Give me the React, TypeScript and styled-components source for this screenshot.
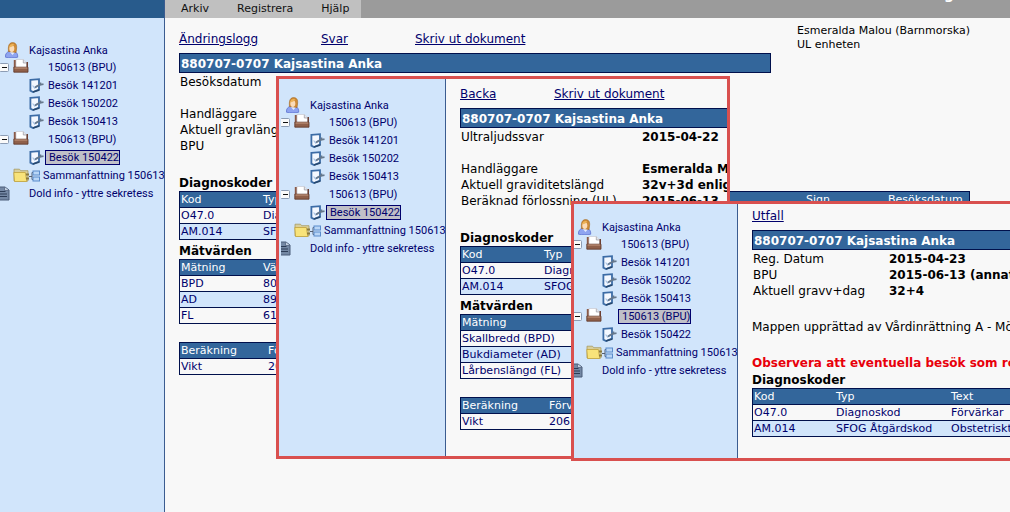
import React from "react";
import styled, { createGlobalStyle, css } from "styled-components";

const navy = "#00006c";
const steel = "#33669b";
const ink = "#00104c";
const pale = "#d1e5fb";
const verdana = `"DejaVu Sans", Verdana, sans-serif`;
const treeFont = `Roboto, Tahoma, sans-serif`;

const GlobalStyle = createGlobalStyle`
  *, *::before, *::after { box-sizing: border-box; }
  body {
    margin: 0;
    background: #f8f8f8;
    color: #000;
    font: 12px/16px ${verdana};
  }
`;

const Page = styled.div`
  position: relative;
  display: flex;
  min-height: 100vh;
  overflow: hidden;
`;

const Sidebar = styled.aside<{ $width: number; $top: number }>`
  flex: none;
  width: ${(p) => p.$width}px;
  padding-top: ${(p) => p.$top}px;
  overflow: hidden;
  background: ${pale};
  border-right: 1px solid #3b5c90;
  display: flex;
  flex-direction: column;
`;

const SidebarCap = styled.div`
  height: 18px;
  background: #285b8c;
  margin-bottom: 23px;
`;

const TreeList = styled.ul`
  list-style: none;
  margin: 0;
  padding: 0;
  width: 164px;
  align-self: flex-end;
`;

const TreeRow = styled.li<{ $short?: boolean }>`
  display: flex;
  align-items: center;
  height: ${(p) => (p.$short ? 17 : 18)}px;
`;

const IconSlot = styled.span<{ $indent: number; $width: number }>`
  flex: none;
  display: flex;
  width: ${(p) => p.$width - p.$indent}px;
  margin-left: ${(p) => p.$indent}px;
`;

const Toggle = styled.button`
  flex: none;
  display: flex;
  width: 13px;
  padding: 0;
  border: 0;
  background: none;
`;

const TreeLabel = styled.a<{ $selected?: boolean }>`
  padding-top: 2px;
  font: 11px/14px ${treeFont};
  color: ${navy};
  text-decoration: none;
  white-space: nowrap;
  ${(p) =>
    p.$selected &&
    css`
      margin-left: -3px;
      padding: 0 0 0 3px;
      line-height: 13px;
      background: #c0c0c8;
      border: 1px solid ${navy};
    `}
`;

const Workspace = styled.div`
  flex: 1;
  min-width: 0;
`;

const MenuBar = styled.header`
  display: flex;
  justify-content: space-between;
  height: 18px;
  overflow: hidden;
  background: #9b9b9b;
`;

const Menu = styled.nav`
  display: flex;
  gap: 28px;
  padding: 0 12px 0 16px;
  background: #c0c0c0;
`;

const MenuButton = styled.button`
  padding: 0;
  border: 0;
  background: none;
  color: #111;
  font: 11px/16px ${verdana};
`;

const Brand = styled.span`
  margin: -13px 56px 0 0;
  color: #fff;
  font: bold 14px/14px ${verdana};
`;

const Content = styled.main`
  padding: 0 26px 20px 14px;
`;

const HeadRow = styled.div`
  display: flex;
  gap: 26px;
`;

const HeadMain = styled.div`
  flex: 1;
  min-width: 0;
  padding-top: 13px;
`;

const UserInfo = styled.address`
  flex: none;
  width: 187px;
  padding-top: 6px;
  font: 11px/14px ${verdana};
  white-space: nowrap;
`;

const Links = styled.nav<{ $columns: string }>`
  display: grid;
  grid-template-columns: ${(p) => p.$columns};
  margin-bottom: 6px;
`;

const Link = styled.a`
  justify-self: start;
  color: ${navy};
  white-space: nowrap;
`;

const PatientBar = styled.h1`
  margin: 0 0 1px;
  height: 20px;
  padding: 2px 0 0 1px;
  border: 1px solid ${ink};
  background: ${steel};
  color: #fff;
  font: bold 12px/16px ${verdana};
  white-space: nowrap;
`;

const Facts = styled.dl<{ $label: number; $gap?: number }>`
  display: grid;
  grid-template-columns: ${(p) => p.$label}px auto;
  margin: 0 0 ${(p) => p.$gap ?? 0}px;
  padding-left: 1px;
  white-space: nowrap;

  dt {
    grid-column: 1;
  }
  dd {
    grid-column: 2;
    margin: 0;
    font-weight: bold;
  }
`;

const Note = styled.p<{ $alert?: boolean }>`
  margin: 20px 0 0;
  white-space: nowrap;
  ${(p) =>
    p.$alert &&
    css`
      color: #e8000b;
      font-weight: bold;
    `}
`;

const SectionTitle = styled.h2<{ $space: number }>`
  margin: ${(p) => p.$space}px 0 0;
  font: bold 12px/15px ${verdana};
`;

const Table = styled.table<{ $space?: number; $inset?: number }>`
  width: calc(100% - ${(p) => p.$inset ?? 0}px);
  margin-top: ${(p) => p.$space ?? 0}px;
  table-layout: fixed;
  border-collapse: separate;
  border-spacing: 0;
  border: 1px solid ${ink};
  border-bottom: 0;
  font: 11px/15px ${verdana};
  color: ${navy};

  th,
  td {
    height: 16px;
    padding: 0 0 0 1px;
    border-bottom: 1px solid ${ink};
    text-align: left;
    font-weight: normal;
    white-space: nowrap;
    overflow: hidden;
  }
  th {
    background: ${steel};
    color: #fff;
  }
  tbody tr:nth-child(even) td {
    background: ${pale};
  }
`;

const Window = styled.section`
  position: absolute;
  display: flex;
  overflow: hidden;
  background: #f8f8f8;
  border: 3px solid #d9504f;
`;

const AnswerWindow = styled(Window)`
  left: 276px;
  top: 76px;
  width: 454px;
  height: 383px;
`;

const OutcomeWindow = styled(Window)`
  left: 571px;
  top: 201px;
  right: -3px;
  height: 260px;
`;

/* Wide sheet that runs on past the window's right edge */
const Sheet = styled.div<{ $top: number }>`
  flex: none;
  width: 806px;
  padding: ${(p) => p.$top}px 0 0 14px;
`;

const UserIcon = () => (
  <svg width="16" height="16" viewBox="0 0 16 16">
    <path d="M1.500 15.200C1 12 3 9.800 5.500 9.300h4.500c2.500.5 4 2.900 3.700 5.900-3 .9-9 .9-12.200 0z" fill="#8fa4f0" stroke="#5e74d0" strokeWidth=".8" />
    <path d="M5.500 9.500l3 3.500 3-3.500z" fill="#e4ecff" />
    <path d="M4.500 9.500C4 5 4.500.7 8.500.6c4 0 4.500 3.400 4 6.400L12 10.500 9 10z" fill="#cf8c38" stroke="#a3661f" strokeWidth=".6" />
    <ellipse cx="7.800" cy="6.600" rx="2.500" ry="3.400" fill="#fbdcb8" />
    <path d="M5.200 5.500C5.500 2.500 7.500 1.500 10 2.200 9.500 4 7.500 5 5.200 5.500z" fill="#edb458" />
  </svg>
);

const MinusIcon = () => (
  <svg width="9" height="9" viewBox="0 0 9 9">
    <rect x="-.5" y=".5" width="9" height="8" rx="1" fill="#fafafa" stroke="#8c9cb4" />
    <path d="M2 4.500h5" stroke="#111" />
  </svg>
);

const BinderIcon = () => (
  <svg width="16" height="16" viewBox="0 0 16 16">
    <path d="M.8 1h2.700v8H.8z" fill="#8a5a48" />
    <path d="M3 .5h7.500L13.500 4v5H3z" fill="#fff" stroke="#c9c9d0" strokeWidth=".7" />
    <path d="M10.300.8v3.200h3.200" fill="#e4e4e8" stroke="#9a9aa2" strokeWidth=".7" />
    <path d="M13.500 3h1.500v8h-1.500z" fill="#6d4032" />
    <path d="M.8 8.200h14.200v5H.8z" fill="#90604a" stroke="#5c3424" strokeWidth=".8" />
    <path d="M1.500 9h12.800" stroke="#c79a80" />
  </svg>
);

const VisitIcon = () => (
  <svg width="15" height="15" viewBox="0 0 15 15">
    <path d="M1.400 1.800L10 1.200v10.300L4 14 1.400 12.600z" fill="#f4f8ff" stroke="#3c6ca6" strokeWidth="1.800" />
    <path d="M4 14l6.500-2" stroke="#27486e" strokeWidth="1.400" />
    <path d="M3.600 7.500l2 2.500L8 7.500" fill="none" stroke="#a9c4e6" strokeWidth="1.200" />
    <path d="M6 9.500l5-3" stroke="#66788c" strokeWidth="2" />
    <path d="M11.500 4.500v2.200l3-.6" fill="none" stroke="#66788c" strokeWidth="1.600" />
  </svg>
);

const SummaryIcon = () => (
  <svg width="28" height="15" viewBox="0 0 28 15">
    <path d="M1 3V1.200h5.500l1.200 1.500H15V13H1z" fill="#d9cf9c" stroke="#a79a62" strokeWidth=".8" />
    <path d="M.8 4.500h11.500l1.500 9H1.600z" fill="#f8e37a" stroke="#c0a23c" strokeWidth=".8" />
    <path d="M13 5.500h3v2h-3zM13 9.500h3v2h-3z" fill="#8a7a3c" />
    <path d="M16 8.500h3M19 4.500v7M19 4.500h1.500M19 11.500h1.500" stroke="#555f70" fill="none" />
    <rect x="20" y="3" width="6.500" height="4" fill="#b9d6f7" stroke="#5b8ccb" />
    <rect x="20" y="9" width="6.500" height="4" fill="#b9d6f7" stroke="#5b8ccb" />
  </svg>
);

const DocumentIcon = () => (
  <svg width="10" height="15" viewBox="6 0 10 15">
    <path d="M3 1h8l4 3v10H3z" fill="#7488a4" stroke="#4a5c78" />
    <path d="M10.500 1v3.500H15" fill="#c4d0e0" stroke="#4a5c78" strokeWidth=".7" />
    <path d="M5 5.500h6.500M5 8h8M5 10.500h8" stroke="#2c3c56" />
  </svg>
);

type TreeProps = { selected: "folder" | "visit" };

const Folder = ({ selected }: { selected?: boolean }) => (
  <TreeRow>
    <Toggle aria-label="Fäll ihop">
      <MinusIcon />
    </Toggle>
    <IconSlot $indent={0} $width={35}>
      <BinderIcon />
    </IconSlot>
    <TreeLabel href="#" $selected={selected}>
      150613 (BPU)
    </TreeLabel>
  </TreeRow>
);

const Visit = ({ name, selected }: { name: string; selected?: boolean }) => (
  <TreeRow>
    <IconSlot $indent={29} $width={48}>
      <VisitIcon />
    </IconSlot>
    <TreeLabel href="#" $selected={selected}>
      {name}
    </TreeLabel>
  </TreeRow>
);

const Tree = ({ selected }: TreeProps) => (
  <TreeList>
    <TreeRow $short>
      <IconSlot $indent={4} $width={29}>
        <UserIcon />
      </IconSlot>
      <TreeLabel href="#">Kajsastina Anka</TreeLabel>
    </TreeRow>
    <Folder />
    <Visit name="Besök 141201" />
    <Visit name="Besök 150202" />
    <Visit name="Besök 150413" />
    <Folder selected={selected === "folder"} />
    <Visit name="Besök 150422" selected={selected === "visit"} />
    <TreeRow>
      <IconSlot $indent={13} $width={43}>
        <SummaryIcon />
      </IconSlot>
      <TreeLabel href="#">Sammanfattning 150613</TreeLabel>
    </TreeRow>
    <TreeRow>
      <IconSlot $indent={0} $width={29}>
        <DocumentIcon />
      </IconSlot>
      <TreeLabel href="#">Dold info - yttre sekretess</TreeLabel>
    </TreeRow>
  </TreeList>
);

type GridProps = {
  widths: (number | undefined)[];
  head: string[];
  rows: string[][];
  space?: number;
  inset?: number;
};

const DataTable = ({ widths, head, rows, space, inset }: GridProps) => (
  <Table $space={space} $inset={inset}>
    <colgroup>
      {widths.map((w, i) => (
        <col key={i} width={w} />
      ))}
    </colgroup>
    <thead>
      <tr>
        {head.map((h) => (
          <th key={h} scope="col">
            {h}
          </th>
        ))}
      </tr>
    </thead>
    <tbody>
      {rows.map((r) => (
        <tr key={r[0]}>
          {head.map((h, i) => (
            <td key={h}>{r[i]}</td>
          ))}
        </tr>
      ))}
    </tbody>
  </Table>
);

const Diagnoses = ({ inset }: { inset?: number }) => (
  <DataTable
    inset={inset}
    widths={[82, 115, undefined, 82, 82]}
    head={["Kod", "Typ", "Text", "Sign", "Besöksdatum"]}
    rows={[
      ["O47.0", "Diagnoskod", "Förvärkar"],
      ["AM.014", "SFOG Åtgärdskod", "Obstetriskt"],
    ]}
  />
);

export default function App() {
  return (
    <>
      <GlobalStyle />
      <Page>
        <Sidebar $width={165} $top={0}>
          <SidebarCap />
          <Tree selected="visit" />
        </Sidebar>
        <Workspace>
          <MenuBar>
            <Menu>
              <MenuButton>Arkiv</MenuButton>
              <MenuButton>Registrera</MenuButton>
              <MenuButton>Hjälp</MenuButton>
            </Menu>
            <Brand>g</Brand>
          </MenuBar>
          <Content>
            <HeadRow>
              <HeadMain>
                <Links $columns="142px 94px auto">
                  <Link href="#">Ändringslogg</Link>
                  <Link href="#">Svar</Link>
                  <Link href="#">Skriv ut dokument</Link>
                </Links>
                <PatientBar>880707-0707 Kajsastina Anka</PatientBar>
              </HeadMain>
              <UserInfo>
                Esmeralda Malou (Barnmorska)
                <br />
                UL enheten
              </UserInfo>
            </HeadRow>
            <Facts $label={182} $gap={16}>
              <dt>Besöksdatum</dt>
            </Facts>
            <Facts $label={182}>
              <dt>Handläggare</dt>
              <dt>Aktuell gravlängd</dt>
              <dt>BPU</dt>
            </Facts>
            <SectionTitle $space={22}>Diagnoskoder</SectionTitle>
            <Diagnoses inset={14} />
            <SectionTitle $space={4}>Mätvärden</SectionTitle>
            <DataTable
              inset={14}
              widths={[82, undefined]}
              head={["Mätning", "Värde"]}
              rows={[
                ["BPD", "80"],
                ["AD", "89"],
                ["FL", "61"],
              ]}
            />
            <DataTable
              inset={14}
              space={18}
              widths={[87, undefined]}
              head={["Beräkning", "Förväntat"]}
              rows={[["Vikt", "206"]]}
            />
          </Content>
        </Workspace>

        <AnswerWindow>
          <Sidebar $width={167} $top={17}>
            <Tree selected="visit" />
          </Sidebar>
          <Sheet $top={7}>
            <Links $columns="94px auto">
              <Link href="#">Backa</Link>
              <Link href="#">Skriv ut dokument</Link>
            </Links>
            <PatientBar>880707-0707 Kajsastina Anka</PatientBar>
            <Facts $label={181} $gap={16}>
              <dt>Ultraljudssvar</dt>
              <dd>2015-04-22</dd>
            </Facts>
            <Facts $label={181}>
              <dt>Handläggare</dt>
              <dd>Esmeralda Malou</dd>
              <dt>Aktuell graviditetslängd</dt>
              <dd>32v+3d enligt</dd>
              <dt>Beräknad förlossning (UL)</dt>
              <dd>2015-06-13</dd>
            </Facts>
            <SectionTitle $space={22}>Diagnoskoder</SectionTitle>
            <Diagnoses />
            <SectionTitle $space={4}>Mätvärden</SectionTitle>
            <DataTable
              widths={[140, undefined]}
              head={["Mätning", "Värde"]}
              rows={[["Skallbredd (BPD)"], ["Bukdiameter (AD)"], ["Lårbenslängd (FL)"]]}
            />
            <DataTable
              space={18}
              widths={[87, undefined]}
              head={["Beräkning", "Förväntat"]}
              rows={[["Vikt", "206"]]}
            />
          </Sheet>
        </AnswerWindow>

        <OutcomeWindow>
          <Sidebar $width={164} $top={14}>
            <Tree selected="folder" />
          </Sidebar>
          <Sheet $top={4}>
            <Links $columns="auto">
              <Link href="#">Utfall</Link>
            </Links>
            <PatientBar>880707-0707 Kajsastina Anka</PatientBar>
            <Facts $label={136}>
              <dt>Reg. Datum</dt>
              <dd>2015-04-23</dd>
              <dt>BPU</dt>
              <dd>2015-06-13 (annat)</dd>
              <dt>Aktuell gravv+dag</dt>
              <dd>32+4</dd>
            </Facts>
            <Note>Mappen upprättad av Vårdinrättning A - Mödravård</Note>
            <Note $alert>Observera att eventuella besök som registrerats</Note>
            <SectionTitle $space={2}>Diagnoskoder</SectionTitle>
            <Diagnoses />
          </Sheet>
        </OutcomeWindow>
      </Page>
    </>
  );
}
